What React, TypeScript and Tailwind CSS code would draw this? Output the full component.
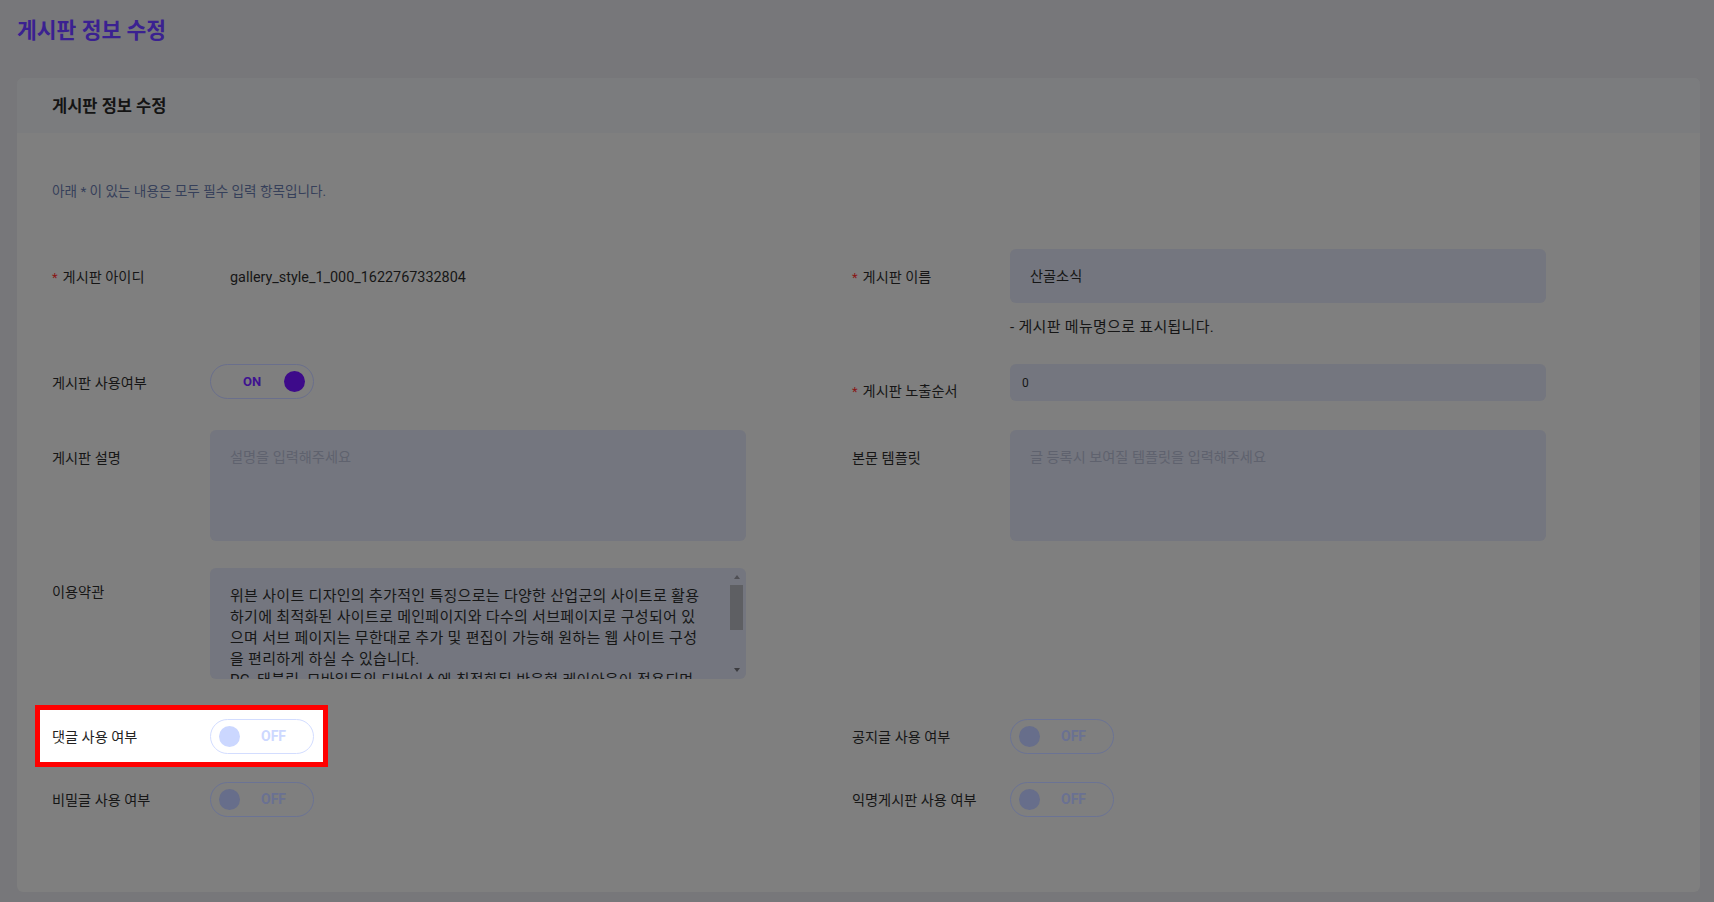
import React from "react";

function Toggle({ on, hl }: { on?: boolean; hl?: boolean }) {
  if (on) {
    return (
      <div className="flex h-[35px] w-[104px] items-center rounded-full border border-[#6a6f8c] pl-[32px] pr-[8px]">
        <span className="text-[13px] font-bold text-[#3e1290]">ON</span>
        <span className="ml-auto h-[21px] w-[21px] rounded-full bg-[#3d0a8a]" />
      </div>
    );
  }
  if (hl) {
    return (
      <div className="flex h-[35px] w-[104px] items-center rounded-full border border-[#d3ddff] bg-white pl-[8px]">
        <span className="h-[21px] w-[21px] rounded-full bg-[#cbd7ff]" />
        <span className="ml-[21px] text-[14px] font-bold text-[#cdd8ff]">OFF</span>
      </div>
    );
  }
  return (
    <div className="flex h-[35px] w-[104px] items-center rounded-full border border-[#6b7394] pl-[8px]">
      <span className="h-[21px] w-[21px] rounded-full bg-[#676e8b]" />
      <span className="ml-[21px] text-[14px] font-bold text-[#6a7192]">OFF</span>
    </div>
  );
}

function Req() {
  return <span className="mr-[5px] text-[13px] text-[#8a1515]">*</span>;
}

const lines = [
  "위븐 사이트 디자인의 추가적인 특징으로는 다양한 산업군의 사이트로 활용",
  "하기에 최적화된 사이트로 메인페이지와 다수의 서브페이지로 구성되어 있",
  "으며 서브 페이지는 무한대로 추가 및 편집이 가능해 원하는 웹 사이트 구성",
  "을 편리하게 하실 수 있습니다.",
  "PC, 태블릿, 모바일등의 디바이스에 최적화된 반응형 레이아웃이 적용되며",
];

export default function App() {
  return (
    <div className="min-h-[902px] w-[1714px] bg-[#77777a] font-['Roboto','Noto_Sans_CJK_KR',sans-serif] text-[14.2px] text-[#161616]">
      <div className="pl-[17px] pt-[16px]">
        <h1 className="text-[21.5px] font-bold leading-[30px] text-[#3a2191]">게시판 정보 수정</h1>
      </div>
      <div className="ml-[17px] mt-[32px] h-[814px] w-[1683px] rounded-md bg-[#7f7f7f]">
        <div className="flex h-[55px] items-center rounded-t-md bg-[#7b7c7e] px-[35px] pt-[3px]">
          <h2 className="text-[16.5px] font-semibold text-[#141414]">게시판 정보 수정</h2>
        </div>
        <div className="px-[35px]">
          <p className="pt-[48px] text-[13.6px] leading-[20px] text-[#36405a]">
            아래 * 이 있는 내용은 모두 필수 입력 항목입니다.
          </p>

          {/* Row 1 */}
          <div className="mt-[48px] flex">
            <div className="flex h-[54px] w-[800px] items-center pt-[3px]">
              <div className="w-[158px]">
                <Req />
                게시판 아이디
              </div>
              <div className="pl-[20px] text-[14.4px]">gallery_style_1_000_1622767332804</div>
            </div>
            <div className="flex w-[800px]">
              <div className="flex h-[54px] w-[158px] items-center pt-[3px]">
                <span>
                  <Req />
                  게시판 이름
                </span>
              </div>
              <div>
                <div className="flex h-[54px] w-[536px] items-center rounded-md bg-[#74767f] px-[20px] pt-[1px]">산골소식</div>
                <div className="mt-[15px] text-[15px] leading-[18px] tracking-[0.3px]">- 게시판 메뉴명으로 표시됩니다.</div>
              </div>
            </div>
          </div>

          {/* Row 2 */}
          <div className="mt-[28px] flex items-start">
            <div className="flex w-[800px] items-center">
              <div className="w-[158px] pt-[2px] leading-[20px]">게시판 사용여부</div>
              <Toggle on />
            </div>
            <div className="flex w-[800px]">
              <div className="w-[158px] pt-[17px] leading-[20px]">
                <Req />
                게시판 노출순서
              </div>
              <div className="flex h-[37px] w-[536px] items-center rounded-md bg-[#74767f] px-[12px] text-[12px]">0</div>
            </div>
          </div>

          {/* Row 3 */}
          <div className="mt-[28px] flex">
            <div className="flex w-[800px]">
              <div className="w-[158px] pt-[18px] leading-[20px]">게시판 설명</div>
              <div className="h-[111px] w-[536px] rounded-md bg-[#74767f] px-[20px] pt-[17px] leading-[20px] text-[#5f626e]">
                설명을 입력해주세요
              </div>
            </div>
            <div className="flex w-[800px]">
              <div className="w-[158px] pt-[18px] leading-[20px]">본문 템플릿</div>
              <div className="h-[111px] w-[536px] rounded-md bg-[#74767f] px-[20px] pt-[17px] leading-[20px] text-[#5f626e]">
                글 등록시 보여질 템플릿을 입력해주세요
              </div>
            </div>
          </div>

          {/* Row 4 */}
          <div className="mt-[27px] flex">
            <div className="flex w-[800px]">
              <div className="w-[158px] pt-[14px] leading-[20px]">이용약관</div>
              <div className="relative h-[111px] w-[536px] overflow-hidden rounded-md bg-[#74767f]">
                <div className="pl-[20px] pt-[18px] text-[15px] leading-[21px] tracking-[0.3px] text-[#161616]">
                  {lines.map((l) => (
                    <div key={l} className="whitespace-nowrap">
                      {l}
                    </div>
                  ))}
                </div>
                <div className="absolute right-[3px] top-0 flex h-full w-[13px] flex-col items-center">
                  <span className="mt-[7px] h-0 w-0 border-x-[3.5px] border-b-[4px] border-x-transparent border-b-[#505055]" />
                  <span className="mt-[6px] h-[45px] w-[13px] bg-[#5e5f63]" />
                  <span className="mb-[7px] mt-auto h-0 w-0 border-x-[3.5px] border-t-[4px] border-x-transparent border-t-[#3c3c40]" />
                </div>
              </div>
            </div>
          </div>

          {/* Row 5 */}
          <div className="mt-[40px] flex">
            <div className="w-[800px]">
              <div className="relative z-10 -mb-[13px] -ml-[17px] -mt-[14px] inline-flex items-center border-[5px] border-[#ff0000] bg-white pb-[8px] pl-[12px] pr-[9px] pt-[9px]">
                <div className="w-[158px] pt-[3px] text-[#222]">댓글 사용 여부</div>
                <Toggle hl />
              </div>
            </div>
            <div className="flex w-[800px] items-center">
              <div className="w-[158px] pt-[3px]">공지글 사용 여부</div>
              <Toggle />
            </div>
          </div>

          {/* Row 6 */}
          <div className="mt-[28px] flex">
            <div className="flex w-[800px] items-center">
              <div className="w-[158px] pt-[3px]">비밀글 사용 여부</div>
              <Toggle />
            </div>
            <div className="flex w-[800px] items-center">
              <div className="w-[158px] pt-[3px]">익명게시판 사용 여부</div>
              <Toggle />
            </div>
          </div>
        </div>
      </div>
    </div>
  );
}
